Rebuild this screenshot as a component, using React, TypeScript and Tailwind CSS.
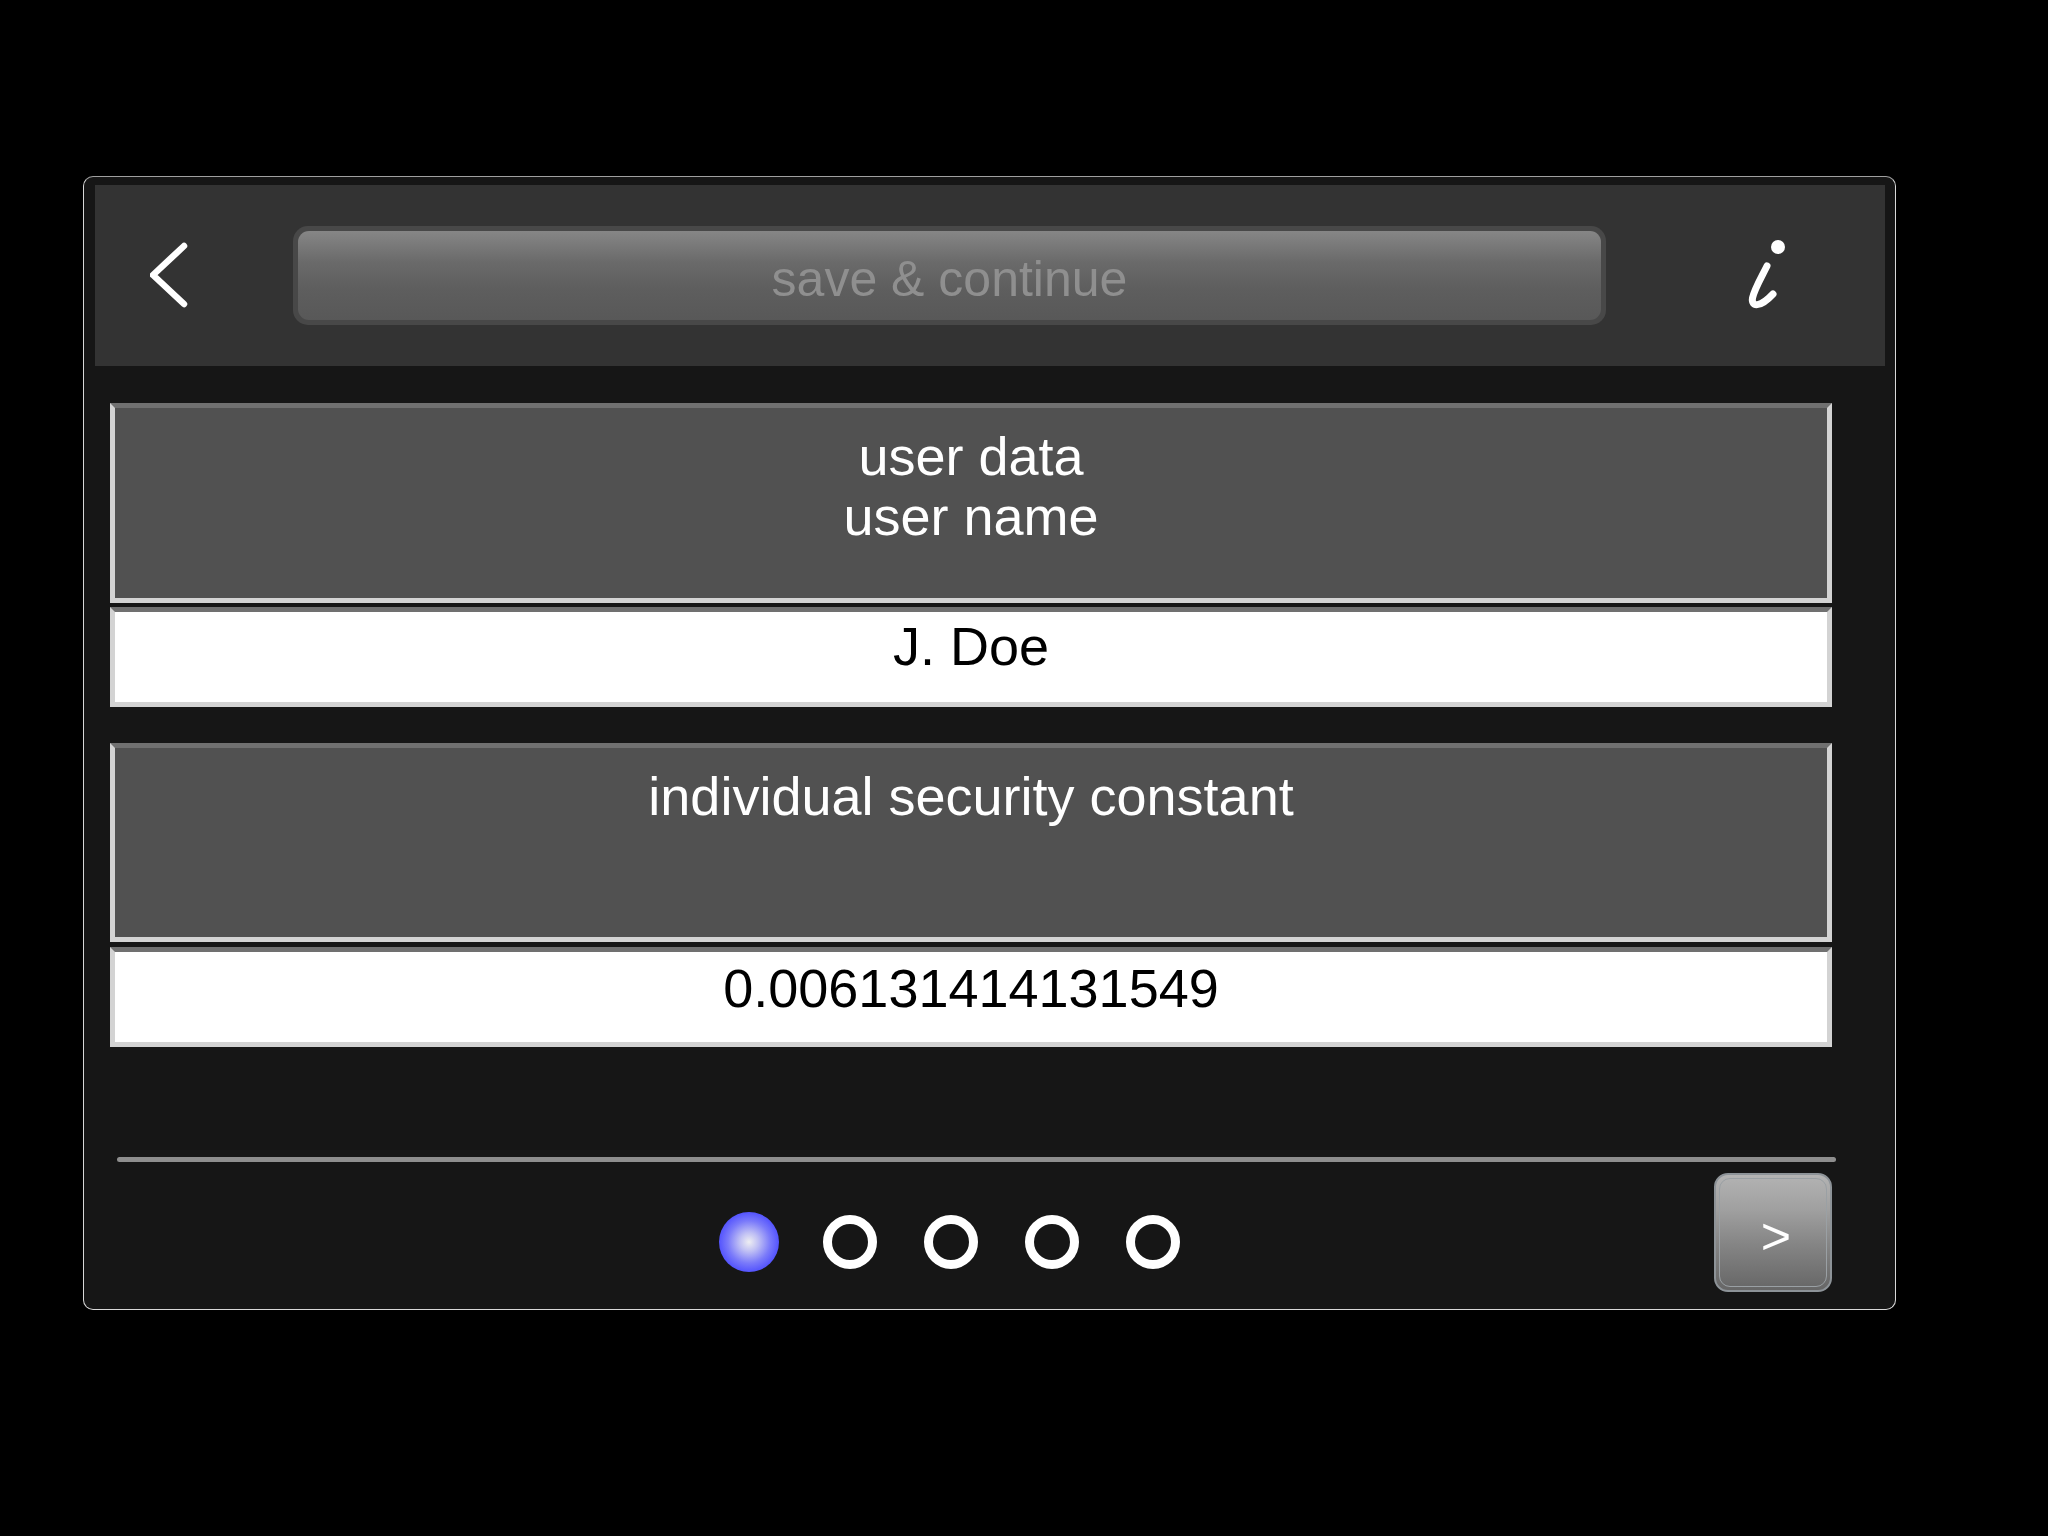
import React from "react";

const font = { fontFamily: '"Liberation Sans", Arial, sans-serif' };

function Card({ children, h }: { children: React.ReactNode; h: string }) {
  return (
    <div className={"w-[1722px] bg-[#515151] border-[5px] border-[#d3d3d3] border-t-[#707070] text-white text-[54px] leading-[60px] text-center pt-[18px] " + h}>
      {children}
    </div>
  );
}

function Field({ children, extra }: { children: React.ReactNode; extra?: string }) {
  return (
    <div
      className={
        "w-[1722px] h-[100px] bg-white border-[5px] border-[#d3d3d3] border-t-[#707070] text-black text-center " +
        (extra ?? "")
      }
    >
      {children}
    </div>
  );
}

export default function App() {
  return (
    <div className="w-[2048px] h-[1536px] bg-black overflow-hidden" style={font}>
      <div className="ml-[83px] mt-[176px] w-[1813px] bg-[#161616] border border-[#d8d8d8] border-t-[#a0a0a0] rounded-[10px] pt-[8px] pl-[11px] pr-[10px]">
        {/* header */}
        <div className="w-[1790px] h-[181px] bg-[#333333] flex items-center">
          <div className="ml-[55px] w-[40px] h-[80px] flex items-center">
            <svg width="40" height="80" viewBox="0 0 40 80">
              <path d="M34 10 L3 39 L34 68" fill="none" stroke="#ffffff" strokeWidth="6.5" strokeLinecap="round" strokeLinejoin="round" />
            </svg>
          </div>
          <div className="ml-[103px] w-[1313px] h-[99px] rounded-[15px] bg-[#484848] p-[5px]">
            <div className="w-full h-full rounded-[11px] bg-[linear-gradient(to_bottom,#868686_0%,#6a6a6a_35%,#5e5e5e_65%,#585858_100%)] flex items-center justify-center text-[#8f8f8f] text-[50px] leading-none pt-[6px]">
              save &amp; continue
            </div>
          </div>
          <div className="ml-[139px] w-[40px] h-[80px]">
            <svg width="40" height="80" viewBox="0 0 40 80">
              <circle cx="33" cy="11" r="7" fill="#ffffff" />
              <path d="M22 30 C 16 42, 9 54, 7.5 62 C 6 71, 15 72, 28 58" fill="none" stroke="#ffffff" strokeWidth="7" strokeLinecap="round" strokeLinejoin="round" />
            </svg>
          </div>
        </div>

        {/* content */}
        <div className="pl-[15px] pt-[37px]">
          <Card h="h-[200px]">
            <div>user data</div>
            <div>user name</div>
          </Card>
          <div className="mt-[4px]">
            <Field extra="text-[54px] leading-[60px] pt-[4px]">J. Doe</Field>
          </div>
          <div className="mt-[36px]">
            <Card h="h-[199px]">individual security constant</Card>
          </div>
          <div className="mt-[5px]">
            <Field extra="text-[54px] leading-[60px] pt-[6px]">0.006131414131549</Field>
          </div>
        </div>

        {/* divider */}
        <div className="mt-[110px] ml-[22px] w-[1719px] h-[5px] rounded-full bg-[#8e8e8e]" />

        {/* bottom row */}
        <div className="flex items-start pb-[17px]">
          <div className="ml-[624px] mt-[50px] flex gap-[41px]">
            <div className="w-[60px] h-[60px] flex items-center justify-center">
              <div className="w-[60px] h-[60px] rounded-full bg-[radial-gradient(circle,#eeeef2_0%,#c0c0f4_22%,#7a7afa_50%,#4646ff_78%,#3030ff_100%)]" />
            </div>
            {[0, 1, 2, 3].map((i) => (
              <div key={i} className="w-[60px] h-[60px] flex items-center justify-center">
                <div className="w-[54px] h-[54px] rounded-full border-[9px] border-white" />
              </div>
            ))}
          </div>
          <div className="ml-[531px] mt-[11px] w-[118px] h-[119px] rounded-[14px] border-[2px] border-[#8d9398] bg-[linear-gradient(to_bottom,#b3b3b3_0%,#a0a0a0_30%,#858585_60%,#666666_100%)] p-[3px]">
            <div className="w-full h-full rounded-[11px] border border-[#9aa0a4] flex items-center justify-center text-white text-[52px] leading-none pl-[6px] pt-[6px]">
              &gt;
            </div>
          </div>
        </div>
      </div>
    </div>
  );
}
